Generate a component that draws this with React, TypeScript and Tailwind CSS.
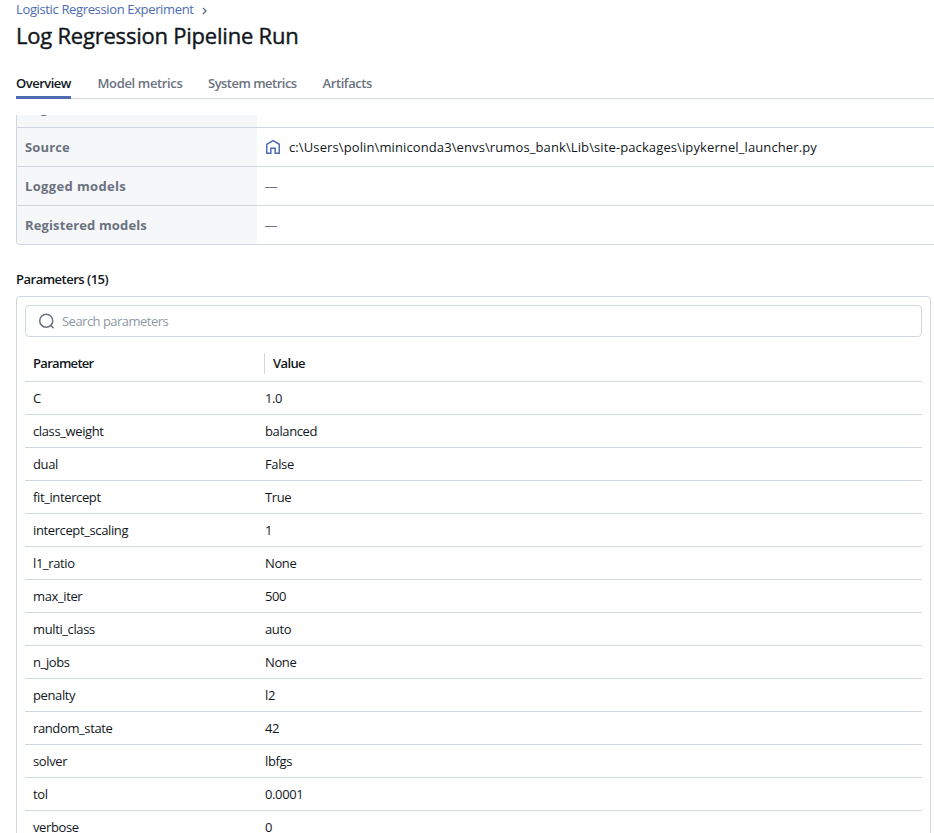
import React from "react";

const details: { label: string; tracking: string; value: React.ReactNode }[] = [
  { label: "Tags", tracking: "tracking-normal", value: null },
  {
    label: "Source",
    tracking: "tracking-[0.15px]",
    value: (
      <span className="flex items-center gap-2">
        <HomeIcon />
        <span className="tracking-[0.11px] text-[#11171c]">
          c:\Users\polin\miniconda3\envs\rumos_bank\Lib\site-packages\ipykernel_launcher.py
        </span>
      </span>
    ),
  },
  { label: "Logged models", tracking: "tracking-[0.36px]", value: <span className="-ml-[0.5px]">—</span> },
  { label: "Registered models", tracking: "tracking-[0.13px]", value: <span className="-ml-[0.5px]">—</span> },
];

const params: [string, string][] = [
  ["C", "1.0"],
  ["class_weight", "balanced"],
  ["dual", "False"],
  ["fit_intercept", "True"],
  ["intercept_scaling", "1"],
  ["l1_ratio", "None"],
  ["max_iter", "500"],
  ["multi_class", "auto"],
  ["n_jobs", "None"],
  ["penalty", "l2"],
  ["random_state", "42"],
  ["solver", "lbfgs"],
  ["tol", "0.0001"],
  ["verbose", "0"],
  ["warm_start", "False"],
];

function HomeIcon() {
  return (
    <svg width="16" height="16" viewBox="0 0 16 16" fill="none" stroke="#4e6cb3" strokeWidth="1.5">
      <path d="M1.75 5.3 8 1.6l6.25 3.7v8.95H10.2V9.3H5.8v4.95H1.75z" />
    </svg>
  );
}

function SearchIcon() {
  return (
    <svg width="16" height="16" viewBox="0 0 16 16" fill="none" stroke="#6b7280" strokeWidth="1.5">
      <circle cx="8.2" cy="7.8" r="6.5" />
      <path d="m12.7 12.3 2.8 2.8" />
    </svg>
  );
}

export default function App() {
  return (
    <div className="flex h-[833px] w-[934px] flex-col overflow-hidden bg-white pl-4 font-['Open_Sans','Noto_Sans',sans-serif] text-[13px] leading-5 text-[#11171c]">
      <header className="flex h-[68px] shrink-0 flex-col whitespace-nowrap">
        <nav className="flex h-[18px] items-center gap-2 text-[#4e6cb3]">
          <span className="tracking-[-0.36px]">Logistic Regression Experiment</span>
          <svg className="mt-[3px]" width="5" height="8" viewBox="0 0 5 8" fill="none" stroke="#5f7281" strokeWidth="1.4">
            <path d="m1 1 3 3-3 3" />
          </svg>
        </nav>
        <h1 className="mt-[3px] text-[22px] leading-7 tracking-[-0.22px] [-webkit-text-stroke:0.4px_#11171c]">Log Regression Pipeline Run</h1>
      </header>

      <div className="flex h-[31px] shrink-0 gap-[26px] border-b border-[#d1d7e0] font-semibold whitespace-nowrap text-[#6b7280]">
        <span className="h-[31px] w-[55px] border-b-3 border-[#4e6cb3] pt-[5px] tracking-[-0.5px] text-[#11171c]">Overview</span>
        <span className="w-[84px] pt-[5px] pl-[0.5px] tracking-[-0.36px]">Model metrics</span>
        <span className="w-[89px] pt-[5px] pl-px tracking-[-0.52px]">System metrics</span>
        <span className="pt-[5px] pl-[0.5px] tracking-[-0.4px]">Artifacts</span>
      </div>

      <div className="mt-4 flex h-[130px] shrink-0 flex-col justify-end overflow-hidden rounded-bl border-b border-l border-[#d1d7e0]">
        {details.map((d, i) => (
          <div
            key={d.label}
            className={i === details.length - 1 ? "flex h-[38px] shrink-0" : "flex h-[39px] shrink-0 border-b border-[#d1d7e0]"}
          >
            <div className={`flex w-60 shrink-0 items-center bg-[#f6f7f9] pl-2 font-bold text-[#6b7280] ${d.tracking}`}>{d.label}</div>
            <div className="flex items-center pl-2 whitespace-nowrap text-[#6b7280]">{d.value}</div>
          </div>
        ))}
      </div>

      <h2 className="mt-6 h-5 shrink-0 font-semibold tracking-[-0.5px]">Parameters (15)</h2>

      <section className="mt-[7px] flex h-[600px] w-[915px] shrink-0 flex-col rounded border border-[#d1d7e0] p-2">
        <label className="flex h-8 shrink-0 items-center gap-2 rounded border border-[#d1d7e0] pl-3 text-[#8e98a3]">
          <SearchIcon />
          <span className="tracking-[-0.52px]">Search parameters</span>
        </label>
        <div className="flex h-[45px] shrink-0 items-center border-b border-[#d1d7e0] pt-2 font-semibold tracking-[-0.7px]">
          <span className="w-[239px] pl-2">Parameter</span>
          <span className="flex h-[21px] items-center border-l border-[#d1d7e0] pl-2 tracking-[-0.6px]">Value</span>
        </div>
        {params.map(([name, value]) => (
          <div key={name} className="flex h-[33px] shrink-0 items-center border-b border-[#d1d7e0] tracking-[-0.38px]">
            <span className="w-60 pl-2">{name}</span>
            <span>{value}</span>
          </div>
        ))}
      </section>
    </div>
  );
}
